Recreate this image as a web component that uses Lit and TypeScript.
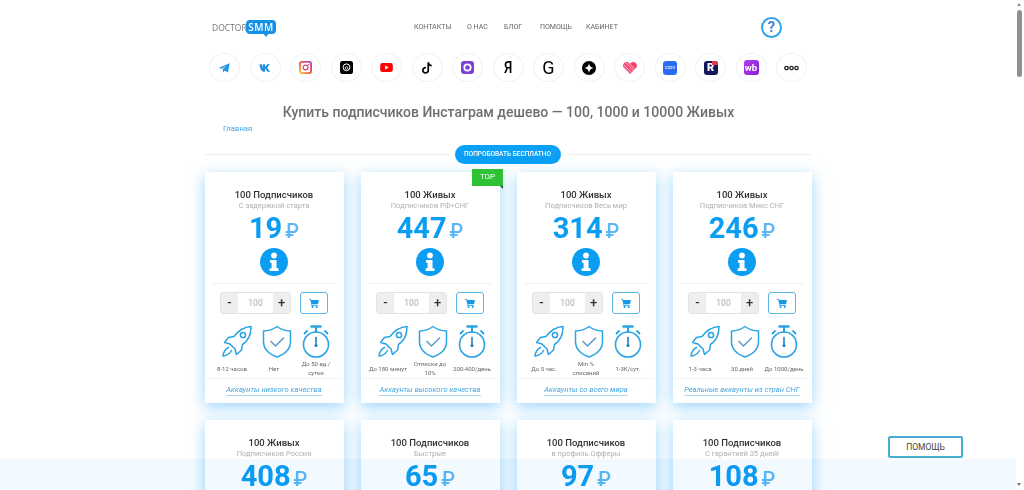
import { LitElement, html, css, svg } from "lit";
import { customElement } from "lit/decorators.js";

const BLUE = "#29a3e3";

const rocket = svg`<svg class="ico r" width="32" height="33" viewBox="0 0 32 33" fill="none" stroke="${BLUE}" stroke-width="1.5" stroke-linejoin="round" stroke-linecap="round">
  <path d="M30 1.500C23 2 17.500 5.500 13 11.500L7.500 12.500 3.500 17.500l5.500 1.500 5 5 1.500 5.500 5-4.500 1-5.500C27 16 30 9 30 1.500Z"/>
  <circle cx="22" cy="10" r="2.600"/>
  <path d="M7.500 22.500C4.500 24 2.500 27 2 31c3.500-.5 7-2.500 8.500-5.500"/>
</svg>`;

const shield = svg`<svg class="ico sh" width="30" height="33" viewBox="0 0 30 33" fill="none" stroke="${BLUE}" stroke-width="1.5" stroke-linejoin="round" stroke-linecap="round">
  <path d="M15 1.500C11 4.500 6.500 6 1.500 6v10.500C1.500 24.500 8 29.500 15 32c7-2.500 13.500-7.500 13.500-15.500V6C23.500 6 19 4.500 15 1.500Z"/>
  <path d="M9 16.500l4.500 4.500L21.500 13" stroke="#5a9cc4"/>
</svg>`;

const watch = svg`<svg class="ico" width="30" height="33" viewBox="0 0 30 33" fill="none" stroke="${BLUE}" stroke-width="1.600" stroke-linecap="round">
  <circle cx="15" cy="19.500" r="12.500"/>
  <path d="M10.500 1.500h9" stroke-width="2.400"/>
  <path d="M15 2v5" stroke-width="2"/>
  <path d="M3.500 8.500l2.500-2.500M26.500 8.500L24 6" stroke-width="1.800"/>
  <path d="M15 12.500v8" stroke="#1b7fc4" stroke-width="1.600"/>
  <circle cx="15" cy="20.500" r="1.500" fill="#1b7fc4" stroke="none"/>
</svg>`;

const info = svg`<svg width="28" height="28" viewBox="0 0 28 28">
  <circle cx="14" cy="14" r="14" fill="#0a9df2"/>
  <circle cx="14" cy="7.500" r="2.900" fill="#fff"/>
  <path d="M10 12h6.500v8.300H18.500V23H9.700v-2.700h1.900v-5.600H10Z" fill="#fff"/>
</svg>`;

const cart = svg`<svg width="10" height="9" viewBox="0 0 10 9" fill="#159be6">
  <path d="M0 0h1.900l.3 1H10L8.900 5.300H3.200l.2.900h5.300v.8H2.700L1.300.8H0Z"/>
  <circle cx="3.500" cy="8" r="1"/><circle cx="7.800" cy="8" r="1"/>
</svg>`;

const socials = [
  svg`<svg width="11" height="10" viewBox="0 0 16 14"><path d="M0 6.500 15.500 0 13 13.500 8.300 10.500 6 13 5.300 8.700 12 3 3.800 8Z" fill="#1e96e8"/></svg>`,
  svg`<svg width="12" height="8" viewBox="0 0 15 11"><path d="M0 .5h3l1.500 5.500V.5h3v4L10.500.5H14L10.500 5 14.500 10.500H11L7.500 6v4.500H5.500C2.500 10.500.5 6 0 .5Z" fill="#1b8fe0"/></svg>`,
  svg`<svg width="13" height="13" viewBox="0 0 14 14"><defs><linearGradient id="ig" x1="0" y1="1" x2="1" y2="0"><stop offset="0" stop-color="#fdc02f"/><stop offset=".5" stop-color="#f0503f"/><stop offset="1" stop-color="#b63ec7"/></linearGradient></defs><rect x="1" y="1" width="12" height="12" rx="2.500" fill="none" stroke="url(#ig)" stroke-width="2"/><circle cx="7" cy="7" r="2.600" fill="none" stroke="#d8496a" stroke-width="1.300"/><circle cx="10.300" cy="3.700" r=".8" fill="#c03fa0"/></svg>`,
  svg`<svg width="13" height="13" viewBox="0 0 13 13"><rect width="13" height="13" rx="2.500" fill="#000"/><circle cx="6.500" cy="6.300" r="3.400" fill="none" stroke="#fff" stroke-width="1"/><circle cx="6.500" cy="7" r="1.300" fill="none" stroke="#fff" stroke-width=".8"/></svg>`,
  svg`<svg width="13" height="9" viewBox="0 0 14 10"><rect width="14" height="10" rx="2.500" fill="#f00"/><path d="M5.500 2.700v4.600L9.500 5Z" fill="#fff"/></svg>`,
  svg`<svg width="10" height="12" viewBox="0 0 13 15"><path d="M7 0h2.300c.2 1.800 1.500 3 3.300 3.200v2.300c-1.200 0-2.400-.4-3.300-1.100v6c0 2.600-2 4.600-4.600 4.600S0 13 0 10.400s2.400-4.800 5-4.500v2.400c-1.400-.3-2.700.7-2.700 2.100s1 2.300 2.300 2.300S7 11.700 7 10.300Z" fill="#000"/></svg>`,
  svg`<svg width="13" height="13" viewBox="0 0 13 13"><rect width="13" height="13" rx="3" fill="#7c42d6"/><circle cx="6.500" cy="6.500" r="3.200" fill="none" stroke="#fff" stroke-width="1.700"/></svg>`,
  html`<span class="ya">Я</span>`,
  html`<span class="g">G</span>`,
  svg`<svg width="14" height="14" viewBox="0 0 14 14"><circle cx="7" cy="7" r="7" fill="#000"/><path d="M7 2.200C7.400 5 9 6.600 11.800 7 9 7.400 7.400 9 7 11.800 6.600 9 5 7.400 2.200 7 5 6.600 6.600 5 7 2.200Z" fill="#fff"/></svg>`,
  svg`<svg width="14" height="12" viewBox="0 0 15 13"><path d="M7.500 13 1.200 6.800C-.4 5.100-.4 2.600 1.200 1.100 2.800-.4 5.300-.3 6.800 1.200l.7.700.7-.7c1.500-1.500 4-1.600 5.600-.1s1.600 4 0 5.700Z" fill="#f4426f"/><path d="M3 1 12 10M6 1 14 9M1 3 9 11M1 6 7 12" stroke="#fff" stroke-width=".9" opacity=".8"/></svg>`,
  html`<span class="sq blue">ozon</span>`,
  html`<span class="sq navy">R<i></i></span>`,
  html`<span class="sq wb">wb</span>`,
  svg`<svg width="15" height="6" viewBox="0 0 15 6" fill="none" stroke="#222" stroke-width="1.300"><circle cx="2.500" cy="3" r="1.700"/><circle cx="7.500" cy="3" r="1.700"/><circle cx="12.500" cy="3" r="1.700"/></svg>`,
];

interface Card {
  title: string;
  sub: string;
  price: string;
  labels?: string[];
  link?: string;
  top?: boolean;
}

const cards: Card[] = [
  { title: "100 Подписчиков", sub: "С задержкой старта", price: "19", labels: ["8-12 часов", "Нет", "До 50 ед./ сутки"], link: "Аккаунты низкого качества" },
  { title: "100 Живых", sub: "Подписчиков РФ+СНГ", price: "447", labels: ["До 180 минут", "Отписки до 10%", "200-400/день"], link: "Аккаунты высокого качества", top: true },
  { title: "100 Живых", sub: "Подписчиков Весь мир", price: "314", labels: ["До 5 час.", "Min % списаний", "1-3К/сут."], link: "Аккаунты со всего мира" },
  { title: "100 Живых", sub: "Подписчиков Микс СНГ", price: "246", labels: ["1-3 часа", "30 дней", "До 1000/день"], link: "Реальные аккаунты из стран СНГ" },
  { title: "100 Живых", sub: "Подписчиков Россия", price: "408" },
  { title: "100 Подписчиков", sub: "Быстрые", price: "65" },
  { title: "100 Подписчиков", sub: "в профиль Офферы", price: "97" },
  { title: "100 Подписчиков", sub: "С гарантией 35 дней!", price: "108" },
];

@customElement("app-root")
export class AppRoot extends LitElement {
  static styles = css`
    :host {
      display: block;
      position: relative;
      height: 490px;
      overflow: hidden;
      background: #fff;
      font-family: Roboto, "Liberation Sans", sans-serif;
    }
    .page { width: 607px; margin-left: 205px; }
    header { height: 53px; display: flex; align-items: center; padding-left: 7px; padding-top: 1px; box-sizing: border-box; }
    .logo { display: flex; align-items: center; width: 64px; height: 20px; flex: none; }
    .logo .doc { font-size: 8.500px; color: #777; width: 34px; font-family: "Open Sans", sans-serif; }
    .bubble { position: relative; width: 30px; height: 14px; border-radius: 4px; background: #1592e6; color: #fff; font-size: 10px; font-weight: 600; letter-spacing: .5px; line-height: 14px; text-align: center; font-family: "Open Sans", sans-serif; }
    .bubble::after { content: ""; position: absolute; left: 17px; top: 13px; border: 3px solid transparent; border-top: 4px solid #1592e6; }
    nav { display: flex; margin-left: 138px; gap: 18.500px; flex: none; }
    nav a { font-size: 8px; line-height: 10px; color: #666; transform: scaleX(.88); transform-origin: left center; white-space: nowrap; }
    nav a.n1 { width: 34px; } nav a.n2 { width: 19px; } nav a.n3 { width: 17px; } nav a.n4 { width: 28px; } nav a.n5 { width: 29px; }
    .qm { margin-left: 146px; box-sizing: border-box; width: 21px; height: 21px; flex: none; border-radius: 50%; border: 2px solid #2fa3ee; color: #4a80d4; font-size: 15px; font-weight: 700; line-height: 17px; text-align: center; }
    .social { display: grid; grid-template-columns: repeat(15, 31px); justify-content: space-between; width: 598px; margin-left: 4px; }
    .sc { box-sizing: border-box; width: 31px; height: 29px; border-radius: 50%; border: 1px solid #edf2f5; display: flex; align-items: center; justify-content: center; }
    .ya { font-size: 17px; font-weight: 500; color: #000; line-height: 1; transform: scaleX(.8); }
    .g { font-size: 18px; font-weight: 400; color: #000; line-height: 1; }
    .sq { width: 14px; height: 14px; border-radius: 3px; display: block; text-align: center; color: #fff; position: relative; overflow: hidden; }
    .blue { background: #2b6cf0; font-size: 4.500px; line-height: 14px; }
    .navy { background: #15155a; font-size: 11px; font-weight: 900; line-height: 14px; }
    .navy i { position: absolute; right: 0; top: 0; width: 6px; height: 4px; background: #e8344c; }
    .wb { width: 15px; height: 15px; background: linear-gradient(135deg, #b13be6, #8a1fd8); font-size: 9.500px; font-weight: 700; line-height: 15px; }
    h1 { margin: 21px 0 0; font-size: 14px; line-height: 18px; font-weight: 500; color: #6f6f6f; text-align: center; white-space: nowrap; }
    .crumb { margin: 2px 0 0 18px; font-size: 7.700px; line-height: 11px; color: #45a5e8; }
    .rule { display: flex; align-items: center; margin-top: 11px; height: 19px; }
    .rule i { flex: 1; height: 1px; background: #e9eef1; }
    .try { width: 106px; height: 19px; margin: 0 8px 0 6px; border-radius: 10px; background: #09a0f5; color: #fff; font-size: 6.500px; font-weight: 500; line-height: 19px; text-align: center; white-space: nowrap; }
    .grid { display: grid; grid-template-columns: repeat(4, 139px); column-gap: 17px; row-gap: 17px; margin-top: 8px; }
    .card { position: relative; box-sizing: border-box; height: 231px; background: #fff; box-shadow: 0 4px 14px rgba(90, 185, 250, .6); display: flex; flex-direction: column; align-items: center; padding-top: 17px; padding-right: 1px; }
    .t { font-size: 9.500px; line-height: 11px; font-weight: 500; color: #333; white-space: nowrap; }
    .s { font-size: 7.500px; line-height: 11px; color: #b0b0b0; white-space: nowrap; }
    .pr { display: flex; align-items: baseline; margin-top: 0; font-size: 29px; line-height: 34px; font-weight: 700; color: #0a9df2; }
    .pr span { font-size: 20px; font-weight: 500; color: #5bb8f4; margin-left: 3px; }
    .inf { margin-top: 0; height: 28px; }
    .hr1 { width: 124px; height: 1px; background: #f0f2f3; margin-top: 7px; flex: none; }
    .buy { display: flex; margin-top: 8px; gap: 9px; }
    .step { box-sizing: border-box; width: 71px; height: 22px; border: 1px solid #e2e2e2; border-radius: 3px; display: flex; overflow: hidden; font-size: 8.500px; color: #aaa; line-height: 20px; text-align: center; }
    .step b { width: 17px; background: #eee; color: #333; font-size: 13px; font-weight: 500; }
    .step span { flex: 1; background: #fff; }
    .cart { box-sizing: border-box; width: 28px; height: 22px; border: 1.500px solid #5db6e4; border-radius: 3px; display: flex; align-items: center; justify-content: center; }
    .feat { display: grid; grid-template-columns: repeat(3, 42px); margin-top: 11px; width: 126px; }
    .fi { display: flex; flex-direction: column; align-items: center; }
    .ico { display: block; flex: none; }
    .r { margin-left: 9px; }
    .sh { margin-left: 5px; }
    .lb { height: 20px; display: flex; align-items: center; justify-content: center; font-size: 6px; line-height: 9px; color: #666; text-align: center; width: 42px; white-space: normal; }
    .hr2 { width: 134px; height: 1px; background: #eff1f2; flex: none; }
    .lnk { margin-top: 6px; font-size: 7.500px; line-height: 10px; font-style: italic; color: #45a5e0; border-bottom: 1px solid #a9d8f2; white-space: nowrap; }
    .topb { position: absolute; right: -3px; top: -3px; width: 31px; height: 17px; background: #2fc234; color: #fff; font-size: 8px; font-weight: 400; line-height: 16px; text-align: center; }
    .topb::after { content: ""; position: absolute; right: 0; top: 17px; border-top: 3px solid #14531a; border-left: 3px solid transparent; }
    .band { position: absolute; left: 0; bottom: 0; width: 1016px; height: 31px; background: #f3faff; mix-blend-mode: multiply; }
    .help { position: absolute; left: 888px; top: 436px; box-sizing: border-box; width: 75px; height: 22px; background: #fff; border: 2px solid #45aed0; border-radius: 2px; font-size: 8.500px; font-weight: 400; line-height: 18px; color: #444; text-align: center; }
    .sb { position: absolute; left: 1017px; top: 10px; width: 5px; height: 67px; border-radius: 3px; background: #8f8f8f; }
    .au { position: absolute; left: 1017px; top: 3px; border: 2.500px solid transparent; border-bottom: 3px solid #8f8f8f; border-top: 0; }
    .ad { position: absolute; left: 1017px; top: 483px; border: 2.500px solid transparent; border-top: 3px solid #777; border-bottom: 0; }
  `;

  private card(c: Card) {
    return html`<div class="card">
      ${c.top ? html`<div class="topb">TOP</div>` : ""}
      <div class="t">${c.title}</div>
      <div class="s">${c.sub}</div>
      <div class="pr">${c.price}<span>₽</span></div>
      <div class="inf">${info}</div>
      <div class="hr1"></div>
      <div class="buy">
        <div class="step"><b>-</b><span>100</span><b>+</b></div>
        <div class="cart">${cart}</div>
      </div>
      <div class="feat">
        ${[rocket, shield, watch].map(
          (ic, i) => html`<div class="fi">${ic}<div class="lb">${c.labels?.[i] ?? ""}</div></div>`
        )}
      </div>
      <div class="hr2"></div>
      <div class="lnk">${c.link ?? ""}</div>
    </div>`;
  }

  render() {
    return html`
      <div class="page">
        <header>
          <div class="logo"><span class="doc">DOCTOR</span><span class="bubble">SMM</span></div>
          <nav>
            <a class="n1">КОНТАКТЫ</a><a class="n2">О НАС</a><a class="n3">БЛОГ</a><a class="n4">ПОМОЩЬ</a><a class="n5">КАБИНЕТ</a>
          </nav>
          <div class="qm">?</div>
        </header>
        <div class="social">${socials.map((s) => html`<div class="sc">${s}</div>`)}</div>
        <h1>Купить подписчиков Инстаграм дешево — 100, 1000 и 10000 Живых</h1>
        <div class="crumb">Главная</div>
        <div class="rule"><i></i><div class="try">ПОПРОБОВАТЬ БЕСПЛАТНО</div><i></i></div>
        <div class="grid">${cards.map((c) => this.card(c))}</div>
      </div>
      <div class="band"></div>
      <div class="help">ПОМОЩЬ</div>
      <div class="au"></div>
      <div class="sb"></div>
      <div class="ad"></div>
    `;
  }
}
